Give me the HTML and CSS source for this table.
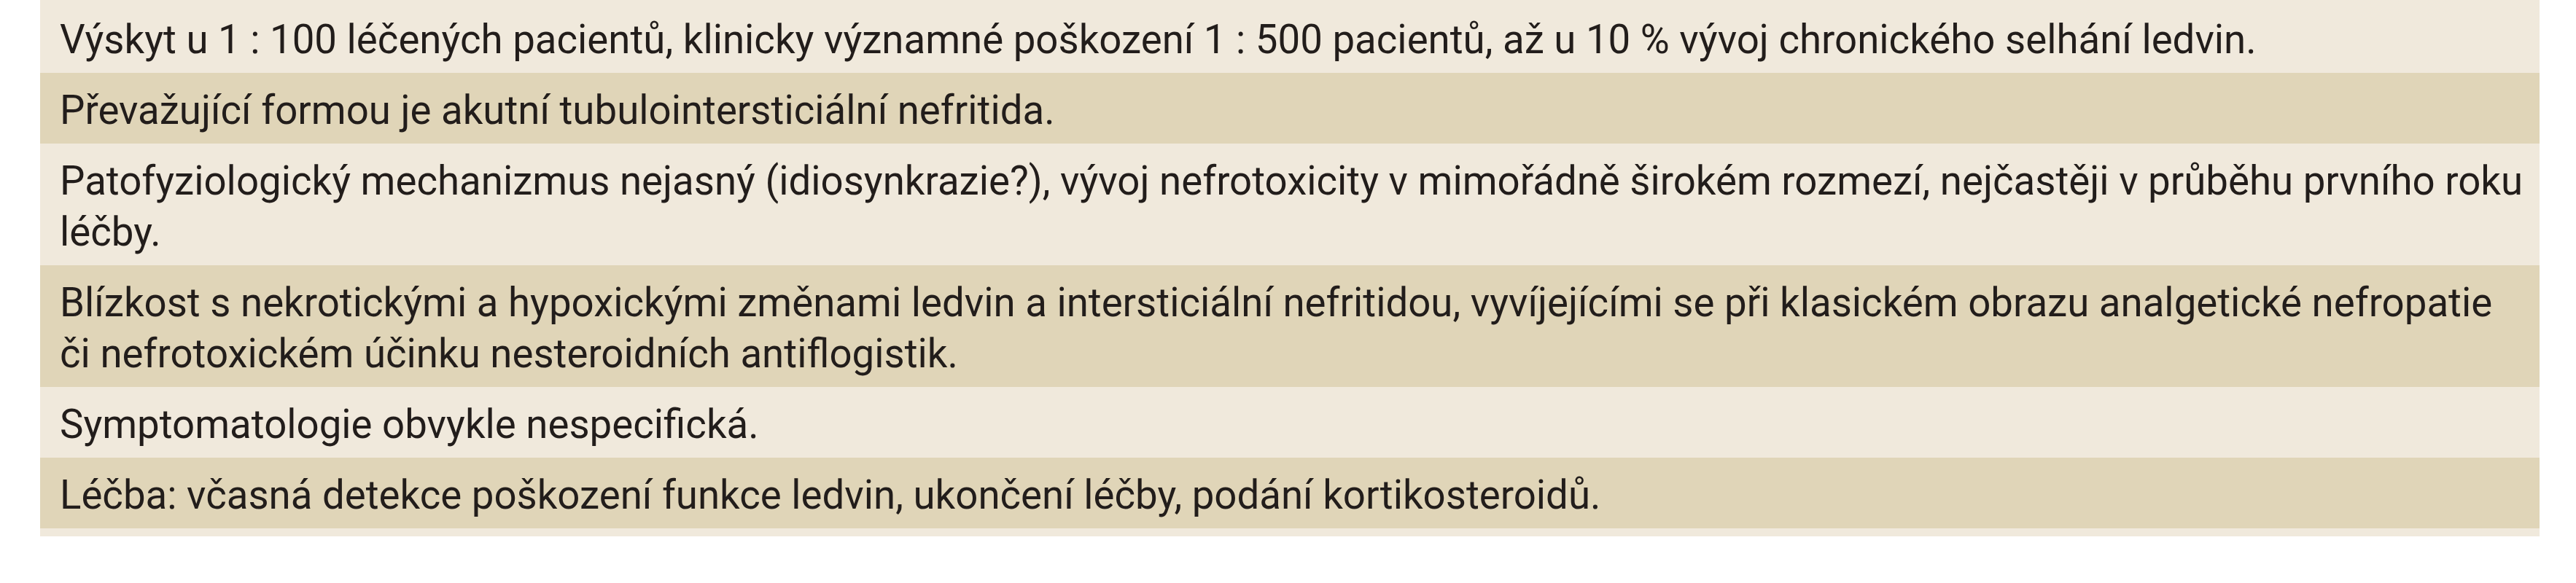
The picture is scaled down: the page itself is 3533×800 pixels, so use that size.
FILE: index.html
```html
<!DOCTYPE html>
<html lang="cs">
<head>
<meta charset="utf-8">
<title>Tabulka</title>
<link rel="stylesheet" href="styles.css">
</head>
<body>
<div class="table">
  <div class="row light">Výskyt u 1&nbsp;:&nbsp;100 léčených pacientů, klinicky významné poškození 1&nbsp;:&nbsp;500 pacientů, až u 10&nbsp;% vývoj chronického selhání ledvin.</div>
  <div class="row dark">Převažující formou je akutní tubulointersticiální nefritida.</div>
  <div class="row light">Patofyziologický mechanizmus nejasný (idiosynkrazie?), vývoj nefrotoxicity v mimořádně širokém rozmezí, nejčastěji v&nbsp;průběhu prvního roku<br>léčby.</div>
  <div class="row dark">Blízkost s nekrotickými a hypoxickými změnami ledvin a intersticiální nefritidou, vyvíjejícími se při klasickém obrazu analgetické nefropatie<br>či nefrotoxickém účinku nesteroidních antiflogistik.</div>
  <div class="row light">Symptomatologie obvykle nespecifická.</div>
  <div class="row dark">Léčba: včasná detekce poškození funkce ledvin, ukončení léčby, podání kortikosteroidů.</div>
</div>
</body>
</html>
```
FILE: styles.css
```css
html, body {
  margin: 0;
  padding: 0;
  background: #ffffff;
}

.table {
  margin-left: 55px;
  width: 3428px;
  padding-top: 3px;
  padding-bottom: 11px;
  background: #f0e9dc;
  font-family: Roboto, "Liberation Sans", sans-serif;
  font-size: 54.6px;
  line-height: 70px;
  color: #221d1b;
}

.row {
  padding: 16px 4px 11px 27px;
  white-space: nowrap;
}

.light {
  background: #f0e9dc;
}

.dark {
  background: #e0d5b8;
}
```
